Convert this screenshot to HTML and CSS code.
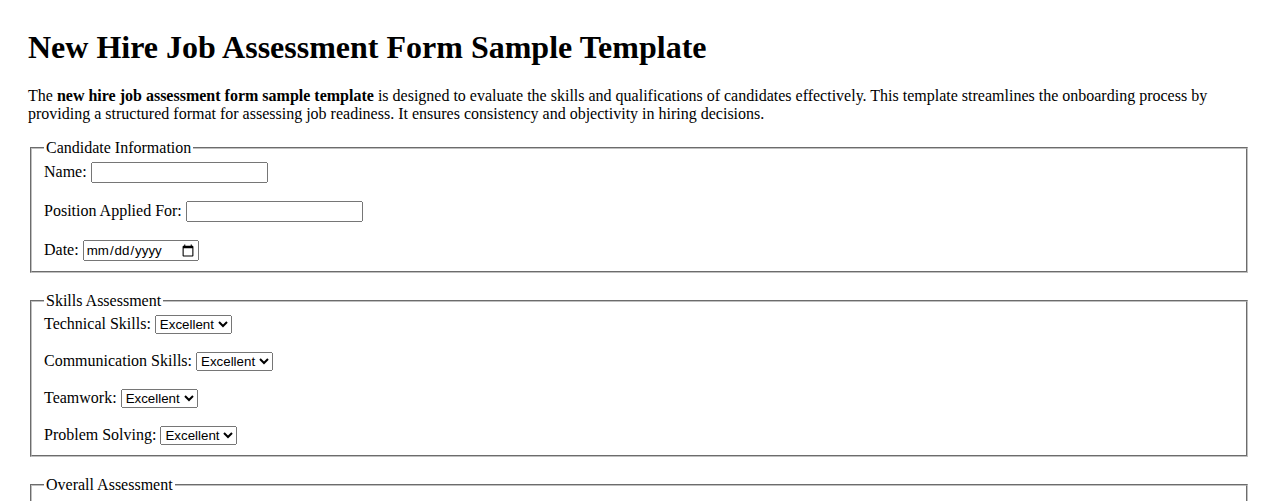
FILE: index.html
```html
<!DOCTYPE html>
<html lang="en">
<head>
<meta charset="utf-8">
<title>New Hire Job Assessment Form Sample Template</title>
<link rel="stylesheet" href="styles.css">
</head>
<body>
<div class="page">
<h1 class="title">New Hire Job Assessment Form Sample Template</h1>
<p class="intro">The <strong>new hire job assessment form sample template</strong> is designed to evaluate the skills and qualifications of candidates effectively. This template streamlines the onboarding process by providing a structured format for assessing job readiness. It ensures consistency and objectivity in hiring decisions.</p>
<form class="form">
<fieldset class="group">
<legend class="legend">Candidate Information</legend>
<label for="name">Name:</label> <input class="text" type="text" id="name"><br><br>
<label for="position">Position Applied For:</label> <input class="text" type="text" id="position"><br><br>
<label for="date">Date:</label> <input class="date" type="date" id="date">
</fieldset>
<fieldset class="group">
<legend class="legend">Skills Assessment</legend>
<label for="tech">Technical Skills:</label> <select class="sel" id="tech"><option>Excellent</option><option>Good</option><option>Average</option><option>Poor</option></select><br><br>
<label for="comm">Communication Skills:</label> <select class="sel" id="comm"><option>Excellent</option><option>Good</option><option>Average</option><option>Poor</option></select><br><br>
<label for="team">Teamwork:</label> <select class="sel" id="team"><option>Excellent</option><option>Good</option><option>Average</option><option>Poor</option></select><br><br>
<label for="prob">Problem Solving:</label> <select class="sel" id="prob"><option>Excellent</option><option>Good</option><option>Average</option><option>Poor</option></select>
</fieldset>
<fieldset class="group">
<legend class="legend">Overall Assessment</legend>
<label for="comments">Comments:</label><br>
<textarea id="comments" rows="4" cols="50"></textarea><br><br>
<label for="rec">Recommendation:</label> <select class="sel" id="rec"><option>Hire</option><option>Do Not Hire</option></select>
</fieldset>
</form>
</div>
</body>
</html>
```
FILE: styles.css
```css
html, body {
  margin: 0;
  padding: 0;
  background: #fff;
}
body {
  font-family: "Liberation Serif", "Times New Roman", serif;
  font-size: 16px;
  color: #000;
}
.page {
  padding: 29px 28px 20px 28px;
}
.title {
  font-size: 32px;
  font-weight: bold;
  margin: 0 0 21px 0;
}
.intro {
  margin: 0 0 16px 0;
}
.group {
  margin: 0 2px 19px 2px;
  border: 2px groove #c0c0c0;
  padding: 5px 12px 10px 12px;
}
.legend {
  padding: 0 2px;
}
.text, .date, .sel {
  font-family: Arial, "Liberation Sans", sans-serif;
  font-size: 13.33px;
}
.text {
  box-sizing: border-box;
  width: 177px;
}
.date {
  box-sizing: border-box;
  width: 116px;
}
```
